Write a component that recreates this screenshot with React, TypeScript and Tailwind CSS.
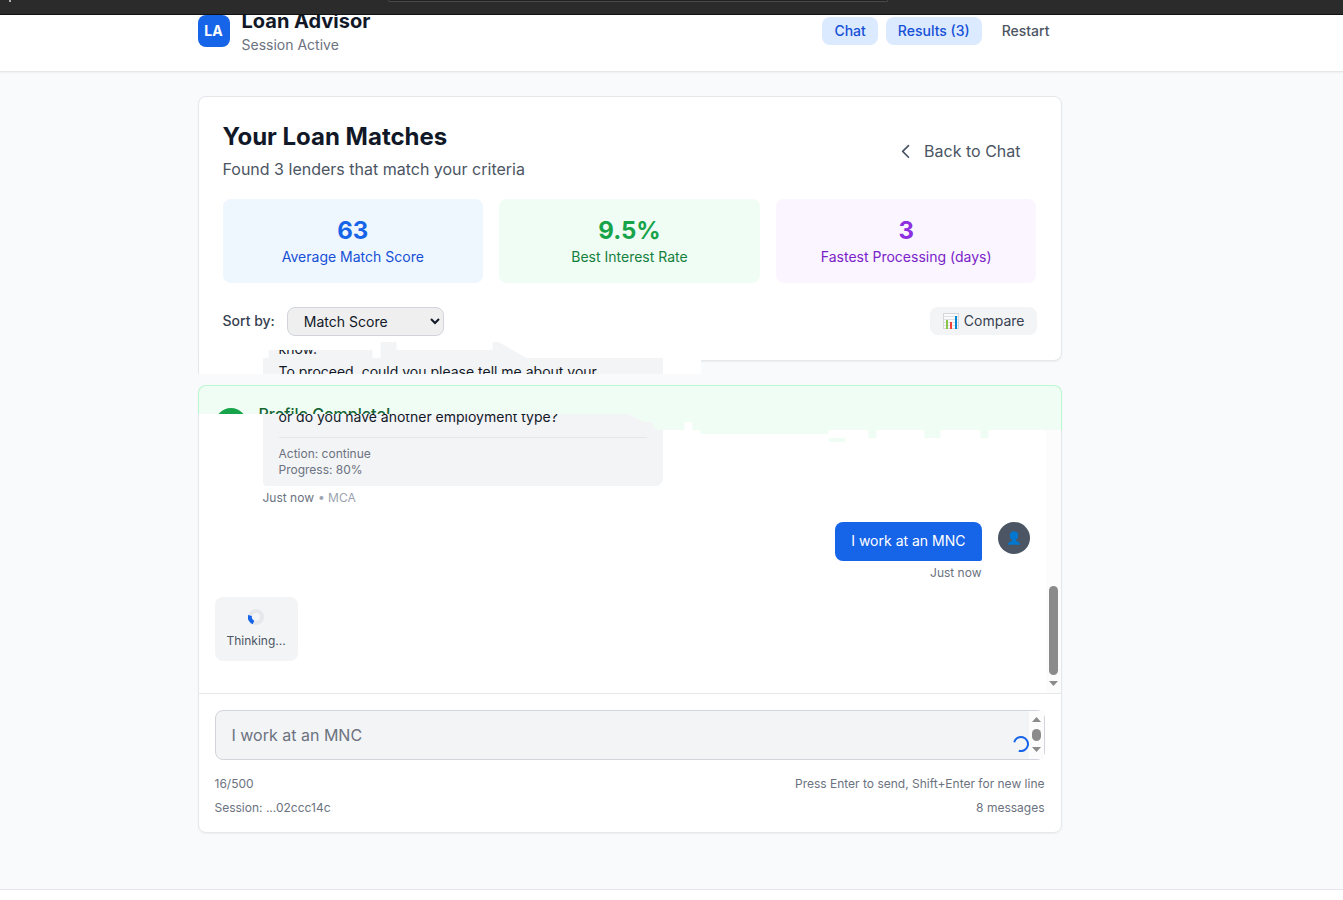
import React from "react";

const stats = [
  { value: "63", label: "Average Match Score", box: "bg-[#eef6fe]", num: "text-[#1664e8]", text: "text-[#1650d6]" },
  { value: "9.5%", label: "Best Interest Rate", box: "bg-[#f0fdf4]", num: "text-[#16a34a]", text: "text-[#15803d]" },
  { value: "3", label: "Fastest Processing (days)", box: "bg-[#faf5ff]", num: "text-[#8d2fe0]", text: "text-[#7a22c8]" },
];

function ChartIcon() {
  return (
    <svg className="h-4 w-[18px]" viewBox="-1 0 18 16" aria-hidden="true">
      <rect x="0.5" y="0.5" width="15" height="15" fill="#fafafa" stroke="#d3d8dc" />
      <path d="M1 3.5H15M1 6.5H15M1 9.5H15M1 12.5H15" stroke="#dde1e4" />
      <rect x="3" y="7" width="2" height="9" fill="#8bc34a" />
      <rect x="7" y="9" width="2" height="7" fill="#f44336" />
      <rect x="12" y="3" width="2" height="13" fill="#0288d1" />
    </svg>
  );
}

function PersonIcon() {
  return (
    <svg className="h-4 w-3" viewBox="0 0 12 16" fill="#0277d0" aria-hidden="true">
      <path d="M6 1.2C8.8 1.2 10.2 2.8 10.2 5.3C10.2 7.7 9.2 9.4 8 10.1V11.1C10 11.6 11.8 12 12 14.7H0C0.2 12 2 11.6 4 11.1V10.1C2.8 9.4 1.8 7.7 1.8 5.3C1.800 2.800 3.200 1.200 6 1.200Z" />
    </svg>
  );
}

function Header() {
  return (
    <header className="-mt-6 border-b border-[#e5e7eb] bg-white py-4 shadow-xs">
      <div className="pr-[84px]">
        <div className="mx-auto flex max-w-4xl items-center justify-between px-4">
          <div className="flex items-center gap-3">
            <div className="flex h-8 w-8 items-center justify-center rounded-lg bg-[#1664e8] text-sm font-bold text-white">LA</div>
            <div>
              <h1 className="text-xl font-bold text-[#111827]">Loan Advisor</h1>
              <p className="text-sm text-[#6b7280]">Session Active</p>
            </div>
          </div>
          <nav className="flex gap-2 text-sm font-medium">
            <button className="rounded-lg bg-[#dbeafe] px-3 py-1 text-[#1650d6]">Chat</button>
            <button className="rounded-lg bg-[#dbeafe] px-3 py-1 text-[#1650d6]">Results (3)</button>
            <button className="rounded-lg px-3 py-1 text-[#4b5563]">Restart</button>
          </nav>
        </div>
      </div>
    </header>
  );
}

function ResultsCard() {
  return (
    <section className="relative rounded-lg border border-[#e5e7eb] bg-white p-6 shadow-xs">
      <div className="mb-[18px] flex items-center justify-between">
        <div>
          <h2 className="text-2xl font-bold text-[#111827]">Your Loan Matches</h2>
          <p className="mt-1 text-base text-[#4b5563]">Found 3 lenders that match your criteria</p>
        </div>
        <button className="flex items-center gap-2 px-4 py-2 text-base text-[#4b5563]">
          <svg className="h-5 w-5" viewBox="0 0 24 24" fill="none" stroke="currentColor" strokeWidth="2" strokeLinecap="round" strokeLinejoin="round" aria-hidden="true">
            <path d="M15 19.500l-7-7 7-7" />
          </svg>
          Back to Chat
        </button>
      </div>
      <div className="grid grid-cols-3 gap-4">
        {stats.map((s) => (
          <div key={s.label} className={`rounded-lg p-4 text-center ${s.box}`}>
            <div className={`text-2xl font-bold ${s.num}`}>{s.value}</div>
            <div className={`text-sm ${s.text}`}>{s.label}</div>
          </div>
        ))}
      </div>
      <div className="mt-6 flex items-start justify-between">
        <div className="flex items-start gap-3 text-sm">
          <label htmlFor="sort" className="leading-7 font-medium text-[#374151]">Sort by:</label>
          <select id="sort" className="h-[29px] w-[157px] rounded-lg border border-[#d1d5db] bg-[#efefef] px-3 text-sm text-[#111827]">
            <option>Match Score</option>
            <option>Interest Rate</option>
          </select>
        </div>
        <button className="flex items-center gap-1 rounded-lg bg-[#f3f4f6] px-3 py-1 text-sm text-[#374151]">
          <ChartIcon />
          Compare
        </button>
      </div>
      <div className="absolute top-[245px] -left-px h-8 w-[503px] overflow-hidden border-l border-[#e5e7eb] bg-white pl-16">
        <div className="flow-root h-8 w-[400px] bg-[#f3f4f6] px-4 [clip-path:polygon(6px_8px,110px_8px,110px_16px,118px_16px,118px_0,134px_0,134px_8px,230px_8px,230px_0,236px_0,264px_16px,401px_16px,401px_32px,0_32px,0_16px,6px_16px)]">
          <p className="-mt-1 text-sm leading-relaxed text-[#111827]">
            know.
            <br />
            To proceed, could you please tell me about your
          </p>
        </div>
      </div>
    </section>
  );
}

function Scrollbar() {
  return (
    <div className="flex w-[15px] shrink-0 flex-col items-center justify-end bg-[#fcfcfc] pb-[7px]" aria-hidden="true">
      <div className="h-[89px] w-[9px] rounded-full bg-[#8b8b8b]" />
      <svg className="mt-1.5 h-[5px] w-[9px]" viewBox="0 0 9 5" fill="#8b8b8b">
        <path d="M0 0H9L4.500 5Z" />
      </svg>
    </div>
  );
}

function Messages() {
  return (
    <div className="relative -mt-7 flex h-[279px] overflow-hidden border-x border-[#e5e7eb] bg-white [clip-path:polygon(-1px_0,430px_0,447px_8px,455px_8px,456px_13px,460px_16px,487px_16px,487px_8px,495px_8px,495px_16px,503px_16px,503px_20px,631px_20px,631px_16px,671px_16px,671px_24px,679px_24px,679px_16px,727px_16px,727px_24px,743px_24px,743px_16px,783px_16px,783px_24px,791px_24px,791px_16px,calc(100%+1px)_16px,calc(100%+1px)_100%,-1px_100%)]">
      <div className="absolute top-6 left-[630px] h-1 w-4 bg-[#f0fdf4]" />
      <div className="-mt-2 flex flex-1 flex-col gap-4 px-4 pb-8">
        <div className="pl-12">
          <div className="w-[400px] rounded-lg rounded-bl-sm bg-[#f3f4f6] px-4 pb-2">
            <p className="text-sm leading-relaxed text-[#111827]">or do you have another employment type?</p>
            <div className="mt-2 border-t border-[#e5e7eb] pt-2 text-xs text-[#6b7280]">
              <p>Action: continue</p>
              <p>Progress: 80%</p>
            </div>
          </div>
          <div className="mt-1 flex gap-1 text-xs text-[#6b7280]">
            Just now <span className="text-[#9ca3af]">• MCA</span>
          </div>
        </div>
        <div className="flex items-start justify-end gap-4">
          <div>
            <p className="rounded-lg rounded-br-xs bg-[#1664e8] px-4 py-2 text-sm leading-relaxed text-white">I work at an MNC</p>
            <p className="mt-1 text-right text-xs text-[#6b7280]">Just now</p>
          </div>
          <div className="flex h-8 w-8 items-center justify-center rounded-full bg-[#4b5563]">
            <PersonIcon />
          </div>
        </div>
        <div className="flex flex-col items-center gap-2 self-start rounded-lg bg-[#f3f4f6] p-3">
          <svg className="h-4 w-4" viewBox="0 0 16 16" fill="none" strokeWidth="4" aria-hidden="true">
            <circle cx="8" cy="8" r="6" stroke="#e5e7eb" />
            <path d="M2 6.500A6 6 0 0 0 5.500 13.500" stroke="#1664e8" />
          </svg>
          <span className="text-xs text-[#4b5563]">Thinking...</span>
        </div>
      </div>
      <Scrollbar />
    </div>
  );
}

function ChatCard() {
  return (
    <section className="mt-6 rounded-lg shadow-xs">
      <div className="flex h-[57px] gap-3 overflow-hidden rounded-t-lg border border-b-0 border-[#bbf7d0] bg-[#f0fdf4] px-4 pt-4">
        <div className="mt-1.5 h-8 w-8 rounded-full bg-[#16a34a]" />
        <h3 className="text-base font-medium text-[#166534]">Profile Complete!</h3>
      </div>
      <Messages />
      <div className="rounded-b-lg border border-[#e5e7eb] bg-white p-4">
        <div className="relative">
          <label htmlFor="message" className="sr-only">Message</label>
          <textarea
            id="message"
            rows={1}
            disabled
            value="I work at an MNC"
            readOnly
            className="block h-[50px] w-full resize-none overflow-hidden rounded-lg border border-[#d1d5db] bg-[#f3f4f6] px-4 py-3 text-base text-[#6b7280]"
          />
          <div className="absolute inset-y-px right-px flex w-[15px] flex-col items-center justify-between bg-[#fcfcfc] pt-1.5 pb-[7px]" aria-hidden="true">
            <svg className="h-[5px] w-[9px]" viewBox="0 0 9 5" fill="#8b8b8b"><path d="M0 5H9L4.500 0Z" /></svg>
            <div className="h-3 w-[9px] rounded-full bg-[#8b8b8b]" />
            <svg className="h-[5px] w-[9px]" viewBox="0 0 9 5" fill="#8b8b8b"><path d="M0 0H9L4.500 5Z" /></svg>
          </div>
          <svg className="absolute right-4 bottom-2 h-4 w-4" viewBox="0 0 16 16" fill="none" stroke="#1664e8" strokeWidth="2" aria-hidden="true">
            <path d="M1.200 6.300A7 7 0 1 1 5.800 14.700" />
          </svg>
        </div>
        <div className="mt-4 flex justify-between text-xs text-[#6b7280]">
          <span>16/500</span>
          <span>Press Enter to send, Shift+Enter for new line</span>
        </div>
        <div className="mt-2 flex justify-between text-xs text-[#6b7280]">
          <span>Session: ...02ccc14c</span>
          <span>8 messages</span>
        </div>
      </div>
    </section>
  );
}

export default function App() {
  return (
    <div className="flex min-h-screen flex-col overflow-hidden bg-[#f9fafb] font-['Inter','Liberation_Sans',sans-serif]">
      <div className="relative z-10 h-[15px] border-b border-[#111111] bg-[#2b2b2b]">
        <div className="absolute top-0 left-[9px] h-0.5 w-0.5 bg-[#b0b0b0]" />
        <div className="absolute top-0 left-[388px] h-0.5 w-[500px] rounded-b-sm border border-t-0 border-[#4a4a4a] bg-[#222222]" />
      </div>
      <Header />
      <main className="pr-[84px]">
        <div className="mx-auto max-w-4xl px-4 py-6">
          <ResultsCard />
          <ChatCard />
        </div>
      </main>
      <footer className="mt-8 min-h-3 flex-1 border-t border-[#e5e7eb] bg-white" />
    </div>
  );
}
